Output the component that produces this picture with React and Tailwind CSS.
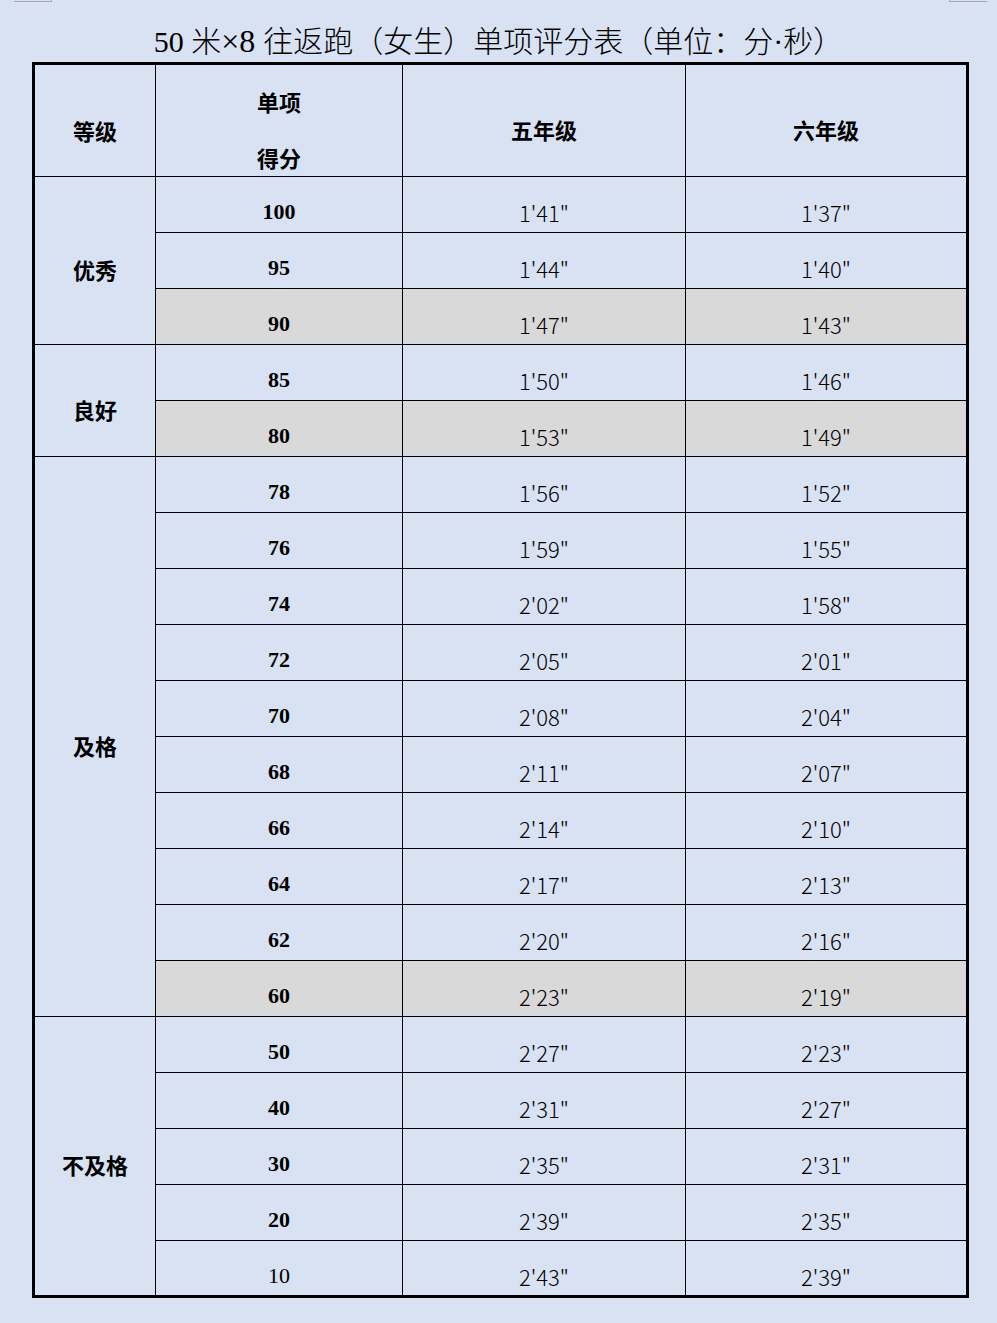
const groups = [
    {
        name: '优秀',
        rows: [
            ['100', "1'41\"", "1'37\""],
            ['95', "1'44\"", "1'40\""],
            ['90', "1'47\"", "1'43\"", true],
        ],
    },
    {
        name: '良好',
        rows: [
            ['85', "1'50\"", "1'46\""],
            ['80', "1'53\"", "1'49\"", true],
        ],
    },
    {
        name: '及格',
        rows: [
            ['78', "1'56\"", "1'52\""],
            ['76', "1'59\"", "1'55\""],
            ['74', "2'02\"", "1'58\""],
            ['72', "2'05\"", "2'01\""],
            ['70', "2'08\"", "2'04\""],
            ['68', "2'11\"", "2'07\""],
            ['66', "2'14\"", "2'10\""],
            ['64', "2'17\"", "2'13\""],
            ['62', "2'20\"", "2'16\""],
            ['60', "2'23\"", "2'19\"", true],
        ],
    },
    {
        name: '不及格',
        rows: [
            ['50', "2'27\"", "2'23\""],
            ['40', "2'31\"", "2'27\""],
            ['30', "2'35\"", "2'31\""],
            ['20', "2'39\"", "2'35\""],
            ['10', "2'43\"", "2'39\""],
        ],
    },
]

const cjk = "font-['Noto_Sans_CJK_SC',sans-serif]"
const serif = "font-['Liberation_Serif',serif]"

export default function App() {
    return (
        <div className="relative min-h-[1323px] w-[997px] bg-[#d9e2f3] text-black">
            {/* page corner marks */}
            <div className="absolute left-[14px] top-0 h-[2px] w-[38px] border-b border-r border-[#a6a6a6]" />
            <div className="absolute left-[949px] top-0 h-[2px] w-[38px] border-b border-l border-[#a6a6a6]" />

            <div className="h-[62px] pt-[21px] text-center">
                <h1 className={`text-[30px] font-light leading-[36px] ${cjk}`}>
                    <span className={`${serif} font-normal`}>50 </span>米<span className={`${serif} font-normal text-[32px]`}>×8 </span>
                    往返跑（女生）单项评分表（单位：分<span className={serif}>·</span>秒）
                </h1>
            </div>

            <div className="pl-[32px]">
                <table className="w-[934px] table-fixed border-collapse border-[3px] border-black">
                    <colgroup>
                        <col className="w-[122px]" />
                        <col className="w-[247px]" />
                        <col className="w-[283px]" />
                        <col className="w-[282px]" />
                    </colgroup>
                    <thead>
                        <tr>
                            <th className={`h-[113px] border border-black p-0 align-top text-[22px] font-bold ${cjk}`}>
                                <div className="pt-[52px] leading-[26px]">等级</div>
                            </th>
                            <th className={`h-[113px] border border-black p-0 align-top text-[22px] font-bold ${cjk}`}>
                                <div className="pt-[23px] leading-[26px]">
                                    <div>单项</div>
                                    <div className="mt-[30px]">得分</div>
                                </div>
                            </th>
                            <th className={`h-[113px] border border-black p-0 align-top text-[22px] font-bold ${cjk}`}>
                                <div className="pt-[51px] leading-[26px]">五年级</div>
                            </th>
                            <th className={`h-[113px] border border-black p-0 align-top text-[22px] font-bold ${cjk}`}>
                                <div className="pt-[51px] leading-[26px]">六年级</div>
                            </th>
                        </tr>
                    </thead>
                    <tbody>
                        {groups.map((g) =>
                            g.rows.map(([score, g5, g6, shaded], i) => (
                                <tr key={score}>
                                    {i === 0 && (
                                        <td
                                            rowSpan={g.rows.length}
                                            className={`border border-black p-0 pt-[16px] text-center align-middle text-[22px] font-bold leading-[26px] ${cjk}`}
                                        >
                                            {g.name}
                                        </td>
                                    )}
                                    <td className={`h-[56px] border border-black p-0 text-center align-top ${shaded ? 'bg-[#d9d9d9]' : ''}`}>
                                        <div className={`pt-[22px] text-[22px] leading-[26px] ${serif} ${score === '10' ? 'font-normal' : 'font-bold'}`}>
                                            {score}
                                        </div>
                                    </td>
                                    <td className={`h-[56px] border border-black p-0 text-center align-top ${shaded ? 'bg-[#d9d9d9]' : ''}`}>
                                        <div className={`pt-[22px] text-[22px] font-light leading-[26px] ${cjk}`}>{g5}</div>
                                    </td>
                                    <td className={`h-[56px] border border-black p-0 text-center align-top ${shaded ? 'bg-[#d9d9d9]' : ''}`}>
                                        <div className={`pt-[22px] text-[22px] font-light leading-[26px] ${cjk}`}>{g6}</div>
                                    </td>
                                </tr>
                            ))
                        )}
                    </tbody>
                </table>
            </div>
        </div>
    )
}
